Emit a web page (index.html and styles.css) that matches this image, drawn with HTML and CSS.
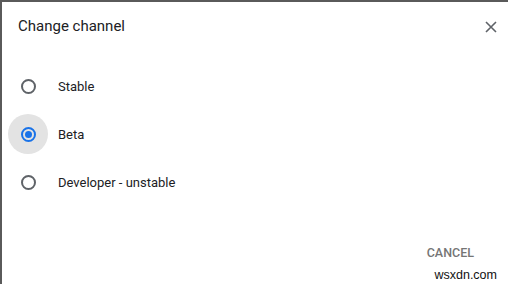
FILE: index.html
```html
<!DOCTYPE html>
<html lang="en">
<head>
  <meta charset="UTF-8">
  <title>Change channel</title>
  <link rel="stylesheet" href="styles.css">
</head>
<body>
  <div class="dialog">
    <header class="dialog-header">
      <h1>Change channel</h1>
      <button class="close" aria-label="Close">
        <svg width="12" height="12" viewBox="0 0 12 12"><path d="M1 1L11 11M11 1L1 11" stroke="#5f6368" stroke-width="1.6"/></svg>
      </button>
    </header>

    <div class="options">
      <label class="option">
        <span class="radio"><span class="ring"></span></span>
        <span class="label">Stable</span>
      </label>
      <label class="option">
        <span class="radio focused"><span class="ring checked"></span></span>
        <span class="label">Beta</span>
      </label>
      <label class="option">
        <span class="radio"><span class="ring"></span></span>
        <span class="label">Developer - unstable</span>
      </label>
    </div>

    <div class="actions">
      <button class="cancel">CANCEL</button>
    </div>
    <div class="watermark">wsxdn.com</div>
  </div>
</body>
</html>
```

FILE: styles.css
```css
body {
  margin: 0;
  background-color: #5a5a5a;
  font-family: Roboto, 'Noto Sans', sans-serif;
  color: #202124;
}

.dialog {
  margin: 2px 0 0 2px;
  height: 282px;
  background-color: #fff;
  position: relative;
}

.dialog-header {
  display: flex;
  justify-content: space-between;
  align-items: center;
  padding: 13px 7px 0 16px;
}

h1 {
  margin: 0;
  font-size: 15px;
  font-weight: 400;
  line-height: 18px;
}

.close {
  background: none;
  border: none;
  padding: 4px;
  display: flex;
  margin-top: 2px;
}

.options {
  padding: 29px 0 0 6px;
  display: flex;
  flex-direction: column;
  gap: 8px;
}

.option {
  display: flex;
  align-items: center;
  height: 40px;
}

.radio {
  width: 40px;
  height: 40px;
  border-radius: 50%;
  display: flex;
  align-items: center;
  justify-content: center;
}

.radio.focused {
  background-color: #e3e3e3;
}

.ring {
  width: 11px;
  height: 11px;
  border: 2px solid #5f6368;
  border-radius: 50%;
  display: flex;
  align-items: center;
  justify-content: center;
}

.ring.checked {
  border-color: #1a73e8;
}

.ring.checked::after {
  content: '';
  width: 7px;
  height: 7px;
  border-radius: 50%;
  background-color: #1a73e8;
}

.label {
  margin-left: 10px;
  font-size: 13px;
}

.actions {
  display: flex;
  justify-content: flex-end;
  padding: 43px 34px 0 0;
}

.cancel {
  background: none;
  border: none;
  font-family: Roboto, sans-serif;
  font-weight: 500;
  font-size: 12.5px;
  color: #757575;
  padding: 0;
}

.watermark {
  position: absolute;
  right: 11px;
  bottom: 2px;
  font-family: 'Liberation Sans', Arial, sans-serif;
  font-size: 12.5px;
  color: #111;
}
```
